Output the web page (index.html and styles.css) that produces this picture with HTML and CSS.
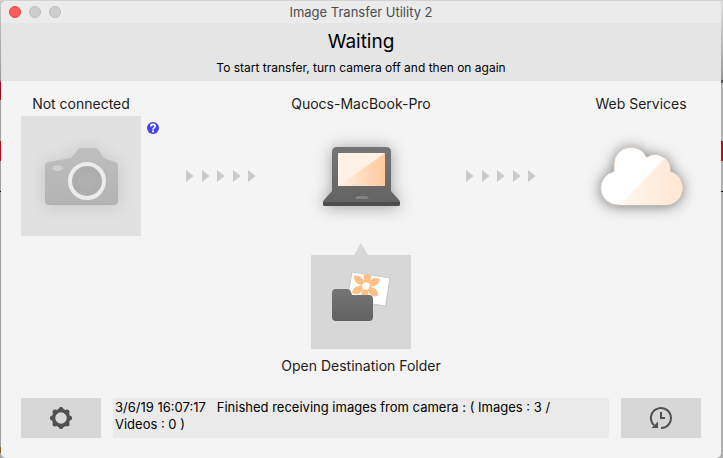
FILE: index.html
```html
<!DOCTYPE html>
<html lang="en">

<head>
    <title>Image Transfer Utility 2</title>
    <meta charset="utf-8">
    <meta name="viewport" content="width=device-width, initial-scale=1.0">
    <link rel="stylesheet" href="styles.css">
</head>

<body>
    <div class="window">
        <div class="titlebar">
            <div class="lights">
                <button class="light close" aria-label="Close"></button>
                <button class="light" aria-label="Minimize"></button>
                <button class="light" aria-label="Zoom"></button>
            </div>
            <div class="title">Image Transfer Utility 2</div>
        </div>
        <header class="status">
            <h1>Waiting</h1>
            <p>To start transfer, turn camera off and then on again</p>
        </header>
        <main class="content">
            <div class="devices">
                <div class="device">
                    <h2>Not connected</h2>
                    <div class="tile">
                        <svg class="art" viewBox="0 0 120 120">
                            <defs>
                                <linearGradient id="cam" x1="0" y1="0" x2="0" y2="1">
                                    <stop offset="0" stop-color="#bebebe" />
                                    <stop offset="1" stop-color="#b3b3b3" />
                                </linearGradient>
                            </defs>
                            <path class="glow faint" fill="url(#cam)" d="M60 32H74Q76 32 77.500 34L82 41Q83 42.500 85 43L94 46Q97 47 97 50V85Q97 89 93 89H28Q24 89 24 85V50Q24 47 27 46L48 42.500Q50 42 51 41L56.500 34Q58 32 60 32Z" />
                            <ellipse cx="36.500" cy="52" rx="5.500" ry="3" fill="#cfcfcf" />
                            <circle cx="66" cy="65" r="17" fill="#adadad" stroke="#ececec" stroke-width="4" />
                            <circle cx="66" cy="65" r="9" fill="#b0b0b0" />
                        </svg>
                        <button class="help" aria-label="Help">
                            <svg viewBox="0 0 12 12">
                                <circle cx="6" cy="6" r="6" fill="#4543ee" />
                                <path d="M3.800 4.600C3.800 1.600 8.200 1.600 8.200 4.200C8.200 5.600 6 5.600 6 7.600" fill="none" stroke="#fff" stroke-width="1.700" />
                                <rect x="5" y="8.400" width="2" height="1.800" fill="#fff" />
                            </svg>
                        </button>
                    </div>
                </div>
                <div class="arrows">
                    <svg viewBox="0 0 70 14"><path fill="#cacaca" d="M0 1L7.500 7L0 13ZM16 1L23.500 7L16 13ZM31 1L38.500 7L31 13ZM47 1L54.500 7L47 13ZM62 1L69.500 7L62 13Z" /></svg>
                </div>
                <div class="device">
                    <h2>Quocs-MacBook-Pro</h2>
                    <svg class="art" viewBox="0 0 120 120">
                        <defs>
                            <linearGradient id="lid" x1="0" y1="0" x2="0" y2="1">
                                <stop offset="0" stop-color="#757575" />
                                <stop offset="1" stop-color="#626262" />
                            </linearGradient>
                            <linearGradient id="shine">
                                <stop offset="0" stop-color="#fff1e4" />
                                <stop offset="1" stop-color="#ffc99a" />
                            </linearGradient>
                        </defs>
                        <path class="glow" fill="url(#lid)" d="M36 31H85Q90 31 90 36V75L98 84Q99 85 99 86V88Q99 90 97 90H24Q22 90 22 88V86Q22 85 23 84L31 75V36Q31 31 36 31Z" />
                        <path fill="#4d4d4d" d="M22 86H99V88Q99 90 97 90H24Q22 90 22 88Z" />
                        <rect x="37" y="37" width="47" height="33" fill="#fff1e4" />
                        <path fill="url(#shine)" d="M84 37V70H37Z" />
                        <path fill="#828282" d="M56 80H66L68 83H54Z" />
                    </svg>
                </div>
                <div class="arrows">
                    <svg viewBox="0 0 70 14"><path fill="#cacaca" d="M0 1L7.500 7L0 13ZM16 1L23.500 7L16 13ZM31 1L38.500 7L31 13ZM47 1L54.500 7L47 13ZM62 1L69.500 7L62 13Z" /></svg>
                </div>
                <div class="device">
                    <h2>Web Services</h2>
                    <svg class="art" viewBox="0 0 120 120">
                        <defs>
                            <linearGradient id="sky">
                                <stop offset="0" stop-color="#fff8f2" />
                                <stop offset="0.800" stop-color="#ffe8d5" />
                            </linearGradient>
                            <clipPath id="cloud">
                                <path d="M36.500 89A17 17 0 0 1 33 55.400V48A17 17 0 0 1 65.600 41.300A15 15 0 0 1 89 55.600A17 17 0 0 1 84.500 89Z" />
                            </clipPath>
                        </defs>
                        <path class="glow strong" fill="#fff" stroke="#d6c5b8" d="M36.500 89A17 17 0 0 1 33 55.400V48A17 17 0 0 1 65.600 41.300A15 15 0 0 1 89 55.600A17 17 0 0 1 84.500 89Z" />
                        <path clip-path="url(#cloud)" fill="url(#sky)" d="M39 89L86 40H104V89Z" />
                    </svg>
                </div>
            </div>
            <div class="destination">
                <button class="folder" aria-labelledby="folder-label">
                    <svg viewBox="0 0 100 106">
                        <defs>
                            <clipPath id="photo"><path d="M41 29L79 35L74.500 63L36 57Z" /></clipPath>
                        </defs>
                        <path fill="#d7d7d7" d="M50 0L57 12H100V106H0V12H43Z" />
                        <path fill="#fff" stroke="#c9c9c9" d="M41 29L79 35L74.500 63L36 57Z" />
                        <g clip-path="url(#photo)">
                            <g transform="translate(55 43) rotate(8)" fill="#ffc086">
                                <path id="petal" d="M-1.500 -3C-5 -8 -4 -13 0 -15.500C4 -13 5 -8 1.500 -3Z" />
                                <use href="#petal" transform="rotate(56)" />
                                <use href="#petal" transform="rotate(122)" />
                                <use href="#petal" transform="rotate(180)" />
                                <use href="#petal" transform="rotate(236)" />
                                <use href="#petal" transform="rotate(302)" />
                                <circle r="5.500" />
                                <circle r="3.800" fill="#fff" />
                            </g>
                        </g>
                        <path fill="url(#lid)" d="M25 46H36Q39 46 40 49L41 52H58Q62 52 62 56V74Q62 78 58 78H25Q21 78 21 74V50Q21 46 25 46Z" />
                    </svg>
                </button>
                <h2 id="folder-label">Open Destination Folder</h2>
            </div>
        </main>
        <footer class="footer">
            <button class="tool" aria-label="Settings">
                <svg viewBox="0 0 24 24">
                    <g fill="#505050">
                        <circle cx="12" cy="3.500" r="2.500" />
                        <circle cx="18" cy="6" r="2.500" />
                        <circle cx="20.500" cy="12" r="2.500" />
                        <circle cx="18" cy="18" r="2.500" />
                        <circle cx="12" cy="20.500" r="2.500" />
                        <circle cx="6" cy="18" r="2.500" />
                        <circle cx="3.500" cy="12" r="2.500" />
                        <circle cx="6" cy="6" r="2.500" />
                    </g>
                    <circle cx="12" cy="12" r="7.500" fill="none" stroke="#505050" stroke-width="3.500" />
                </svg>
            </button>
            <p class="log">3/6/19 16:07:17&nbsp;&nbsp; Finished receiving images from camera : ( Images : 3 / Videos : 0 )</p>
            <button class="tool" aria-label="History">
                <svg viewBox="0 0 24 24" fill="none" stroke="#505050" stroke-width="2">
                    <path d="M12 22A10 10 0 1 0 5 19.200" />
                    <path d="M12 6V12H16" />
                    <path fill="#505050" stroke="none" d="M9 15.500V22H2.500Z" />
                </svg>
            </button>
        </footer>
    </div>
</body>

</html>
```
FILE: styles.css
```css
* {
    box-sizing: border-box;
}

body {
    margin: 0;
    padding: 1px 2px 0 1px;
    min-height: 100vh;
    display: flex;
    font-family: Inter, "Liberation Sans", sans-serif;
    font-size: 14px;
    line-height: 20px;
    color: #1c1c1c;
    /* slivers of the page behind the window */
    background:
        linear-gradient(#d2d2d2, #d2d2d2) top / 100% 1px no-repeat,
        linear-gradient(#c8c8c8, #999 80px, #a00d22 83px, #a00d22 100px, #a0a0a0 100px, #a0a0a0 141px, #b00d22 141px, #b00d22 161px, #a0a0a0 161px, #a0a0a0 191px, #111 191px, #111 192px, #a0a0a0 192px, #a0a0a0 447px, #8c6420 447px, #8c6420 453px, #aaa 453px) left / 50% 100% no-repeat,
        linear-gradient(#e0e0e0, #999 80px, #555 80px, #555 83px, #b0b0b0 83px, #b0b0b0 141px, #b00d22 141px, #b00d22 161px, #b0b0b0 161px, #b0b0b0 191px, #111 191px, #111 192px, #b0b0b0 192px) right / 50% 100% no-repeat;
}

h1,
h2,
p {
    margin: 0;
    font-weight: 400;
}

h2 {
    font-size: 14px;
    white-space: nowrap;
}

button {
    padding: 0;
    border: 0;
    background: none;
    cursor: pointer;
}

svg {
    display: block;
}

.window {
    flex: 1;
    display: flex;
    flex-direction: column;
    border-radius: 5px;
    overflow: hidden;
    background: #f4f4f4;
}

.titlebar {
    display: grid;
    grid-template-columns: 1fr auto 1fr;
    align-items: center;
    height: 22px;
    padding: 0 8px;
    background: #ebebeb;
}

.lights {
    display: flex;
    gap: 8px;
}

.light {
    width: 12px;
    height: 12px;
    border: 1px solid #bdbdbd;
    border-radius: 50%;
    background: #cecece;
}

.close {
    border-color: #e2463f;
    background: #ff5c5a;
}

.title {
    font-size: 13px;
    color: #4d4d4d;
}

.status {
    padding: 7px 20px;
    height: 58px;
    text-align: center;
    color: #000;
    background: #e5e5e5;
}

.status h1 {
    font-size: 19px;
    line-height: 24px;
}

.status p {
    margin-top: 4px;
    font-size: 12px;
}

.content {
    flex: 1;
    padding: 13px 20px 22px;
}

.devices {
    display: grid;
    grid-template-columns: 120px 1fr 120px 1fr 120px;
}

.device {
    display: flex;
    flex-direction: column;
    align-items: center;
    gap: 2px;
}

.tile {
    position: relative;
    background: #e1e1e1;
}

.art {
    width: 120px;
    height: 120px;
    overflow: visible;
}

.glow {
    filter: drop-shadow(0 1px 8px rgba(0, 0, 0, 0.35));
}

.faint {
    filter: drop-shadow(0 1px 8px rgba(0, 0, 0, 0.12));
}

.strong {
    filter: drop-shadow(0 1px 7px rgba(0, 0, 0, 0.5));
}

.help {
    position: absolute;
    top: 6px;
    left: 126px;
    width: 12px;
    height: 12px;
}

.arrows {
    display: flex;
    align-items: center;
    justify-content: center;
    padding-top: 22px;
}

.arrows svg {
    width: 70px;
    height: 14px;
}

.destination {
    display: flex;
    flex-direction: column;
    align-items: center;
    gap: 7px;
    margin-top: 7px;
}

.folder svg {
    width: 100px;
    height: 106px;
}

.footer {
    display: flex;
    gap: 12px;
    padding: 0 20px 20px;
}

.tool {
    flex: none;
    display: flex;
    align-items: center;
    justify-content: center;
    width: 80px;
    height: 40px;
    background: #d7d7d7;
}

.tool svg {
    width: 24px;
    height: 24px;
}

.log {
    flex: 1;
    padding: 1px 24px 1px 2px;
    min-height: 40px;
    font-size: 13px;
    line-height: 17px;
    color: #000;
    background: #eaeaea;
}
```
